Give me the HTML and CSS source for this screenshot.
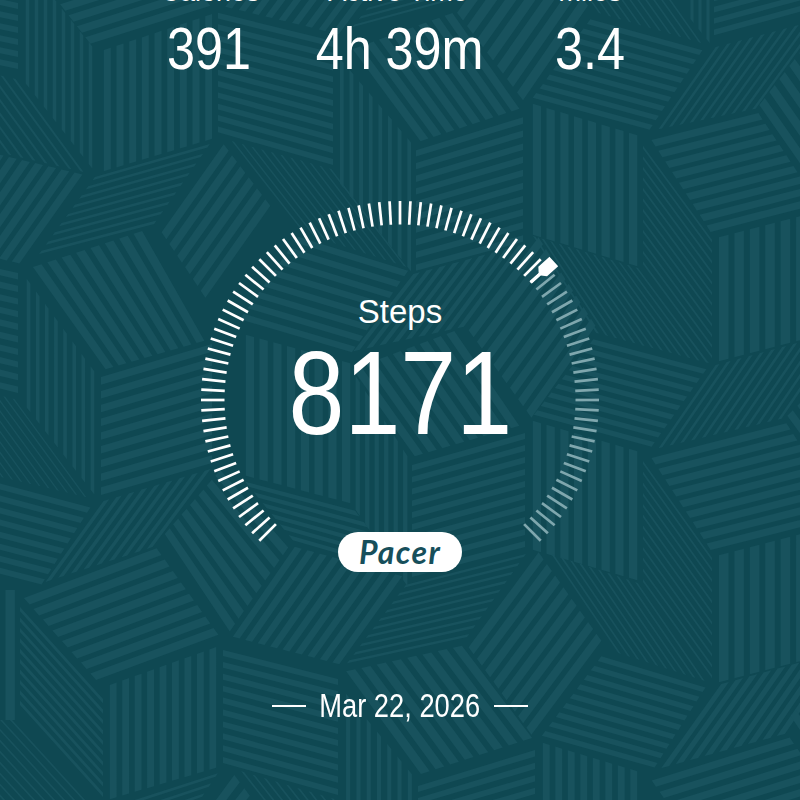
FILE: index.html
```html
<!DOCTYPE html>
<html lang="en">
  <head>
    <meta charset="UTF-8" />
    <meta name="viewport" content="width=device-width, initial-scale=1.0" />
    <title>Pacer - Daily Steps</title>
    <link rel="stylesheet" href="styles.css">
    <script src="main.js" defer></script>
  </head>
  <body>
    <div class="card">
      <!-- striped background -->
      <svg class="pattern" id="pattern" viewBox="0 0 800 800"></svg>

      <ul class="stats">
        <li>
          <span class="label">Calories</span>
          <strong class="narrow">391</strong>
        </li>
        <li>
          <span class="label">Active Time</span>
          <strong class="narrow">4h 39m</strong>
        </li>
        <li>
          <span class="label">miles</span>
          <strong class="narrow">3.4</strong>
        </li>
      </ul>

      <div class="dial">
        <svg class="ring" id="ring" viewBox="-210 -210 420 420"></svg>
        <h1 class="tit">Steps</h1>
        <p class="count narrow">8171</p>
        <div class="logo"><span>Pacer</span></div>
      </div>

      <p class="date"><span class="narrow">Mar 22, 2026</span></p>
    </div>
  </body>
</html>
```
FILE: styles.css
```css
* {
  box-sizing: border-box;
}
body {
  margin: 0;
  font-family: "Liberation Sans", Arial, sans-serif;
  color: #fff;
}
ul,
h1,
p {
  margin: 0;
  padding: 0;
  list-style: none;
  font-weight: normal;
}

.card {
  position: relative;
  display: flex;
  flex-direction: column;
  align-items: center;
  width: 800px;
  height: 800px;
  overflow: hidden;
  background: #0f4852;
}
.pattern {
  position: absolute;
  top: 0;
  left: 0;
  width: 800px;
  height: 800px;
  fill: #18525d;
  /* soft stripe edges */
  filter: blur(0.7px);
}

/* condensed numbers */
.narrow {
  display: block;
  white-space: nowrap;
  transform: scaleX(0.86);
}

/* top row */
.stats {
  position: relative;
  display: grid;
  grid-template-columns: 188px 188px 196px;
  width: 568px;
  margin-top: -24px;
  text-align: center;
}
.label {
  display: block;
  height: 40px;
  font-size: 27px;
  line-height: 32px;
}
.stats strong {
  font-size: 58.5px;
  font-weight: normal;
  line-height: 66px;
}
.stats li:first-child strong {
  transform: translateX(-1px) scaleX(0.86);
}
.stats li:nth-child(2) strong {
  transform: translateX(-1.5px) scaleX(0.86);
}

/* ring */
.dial {
  position: relative;
  display: flex;
  flex-direction: column;
  align-items: center;
  width: 420px;
  height: 420px;
  margin-top: 108px;
}
.ring {
  position: absolute;
  top: 0;
  left: 0;
  width: 420px;
  height: 420px;
  stroke: #fff;
  stroke-width: 2.7;
}
.ring .off {
  stroke: #7fa7ae;
}
.ring .now {
  fill: #fff;
  stroke: none;
}
.tit {
  margin-top: 103px;
  font-size: 33px;
  line-height: 38px;
}
.count {
  margin-top: -5px;
  font-size: 119px;
  line-height: 134px;
  transform: scaleX(0.845);
}
.logo {
  display: flex;
  align-items: center;
  justify-content: center;
  width: 124px;
  height: 40px;
  margin-top: 72px;
  border-radius: 20px;
  background: #fff;
  color: #174f5b;
  font: italic bold 32px/40px Lato, sans-serif;
  letter-spacing: 1.4px;
}

/* date */
.date {
  position: relative;
  display: flex;
  align-items: center;
  justify-content: center;
  width: 256px;
  height: 40px;
  margin-top: 76px;
  font-size: 33.5px;
}
.date .narrow {
  transform: scaleX(0.815);
  margin: 0 -5px;
}
.date::before,
.date::after {
  content: "";
  flex: 0 0 34px;
  height: 2px;
  margin-top: -1px;
  background: #fff;
}
```
FILE: main.js
```js
const NS = "http://www.w3.org/2000/svg";

function add(parent, tag, attrs) {
  const el = document.createElementNS(NS, tag);
  for (const key in attrs) el.setAttribute(key, attrs[key]);
  parent.appendChild(el);
}

// four corners a b c d, stripe count, stripe thickness (0~1)
// stripes run along a-b and stack toward d-c
const tiles = [
  [-90, -48, 18, -24, 18, 72, -90, 50, 8, 0.5],
  [23, -40, 23, 80, 95, 172, 95, 50, 8, 0.4],
  [50, -9, 170, -47, 212, 8, 92, 46, 5, 0.6],
  [101, 51, 101, 172, 215, 138, 215, 13, 9, 0.55],
  [218, 10, 333, 38, 333, 168, 218, 135, 11, 0.5],
  [20, 80, 88, 173, -20, 148, -88, 55, 9, 0.25],
  [85, 175, 22, 264, -80, 240, -20, 150, 8, 0.6],
  [97, 174, 212, 141, 152, 227, 37, 257, 9, 0.35],
  [222, 142, 160, 230, 207, 300, 272, 208, 6, 0.6],
  [228, 140, 300, 232, 410, 268, 335, 170, 11, 0.25],
  [337, 55, 337, 180, 414, 275, 414, 146, 8, 0.4],
  [350, 50, 418, 142, 522, 108, 455, 12, 8, 0.6],
  [416, 147, 523, 114, 523, 245, 416, 274, 10, 0.5],
  [455, 10, 520, -80, 590, 8, 525, 103, 7, 0.6],
  [350, 30, 460, 0, 480, -25, 370, 5, 3, 0.35],
  [222, 6, 285, -80, 405, -50, 342, 35, 9, 0.5],
  [592, 17, 704, 48, 648, 132, 531, 100, 9, 0.5],
  [530, -80, 595, 12, 705, 44, 640, -48, 11, 0.25],
  [688, -60, 688, 16, 712, 46, 712, -60, 3, 0.4],
  [655, 130, 712, 48, 825, 18, 759, 108, 10, 0.35],
  [714, -30, 820, -58, 820, 9, 714, 38, 6, 0.5],
  [757, 108, 820, 198, 880, 120, 817, 30, 6, 0.55],
  [650, 138, 757, 111, 820, 206, 712, 234, 9, 0.6],
  [530, 103, 530, 234, 640, 267, 640, 136, 8, 0.6],
  [530, 235, 593, 332, 712, 364, 641, 269, 13, 0.3],
  [643, 142, 712, 236, 712, 362, 643, 268, 12, 0.3],
  [716, 238, 716, 362, 824, 334, 824, 210, 7, 0.62],
  [595, 337, 708, 367, 650, 449, 532, 417, 9, 0.5],
  [655, 449, 712, 366, 845, 330, 785, 418, 12, 0.35],
  [785, 418, 830, 480, 870, 440, 825, 378, 4, 0.55],
  [650, 456, 785, 421, 847, 518, 712, 552, 9, 0.6],
  [530, 420, 530, 549, 640, 581, 640, 452, 8, 0.6],
  [548, 553, 615, 652, 708, 682, 641, 584, 10, 0.28],
  [643, 457, 712, 554, 712, 682, 643, 586, 12, 0.28],
  [716, 556, 716, 683, 824, 655, 824, 528, 7, 0.62],
  [603, 654, 707, 685, 653, 770, 540, 738, 9, 0.5],
  [658, 769, 718, 685, 845, 650, 788, 733, 9, 0.55],
  [788, 718, 830, 780, 870, 740, 830, 678, 4, 0.55],
  [650, 778, 788, 735, 850, 825, 712, 868, 8, 0.55],
  [540, 742, 540, 860, 640, 860, 640, 772, 8, 0.55],
  [467, 645, 537, 550, 603, 643, 533, 737, 8, 0.6],
  [467, 328, 537, 235, 597, 328, 533, 420, 8, 0.6],
  [350, 352, 410, 275, 528, 243, 467, 326, 9, 0.5],
  [345, 666, 465, 640, 528, 551, 408, 582, 10, 0.35],
  [230, 636, 292, 546, 405, 577, 342, 665, 9, 0.55],
  [300, 234, 410, 268, 350, 355, 238, 322, 8, 0.5],
  [243, 334, 243, 475, 353, 504, 353, 364, 8, 0.6],
  [353, 372, 353, 506, 410, 590, 410, 460, 6, 0.45],
  [350, 370, 412, 457, 522, 425, 457, 330, 8, 0.6],
  [412, 462, 525, 430, 525, 550, 412, 580, 10, 0.5],
  [243, 479, 353, 508, 405, 575, 295, 543, 6, 0.5],
  [163, 536, 228, 634, 290, 545, 222, 468, 7, 0.6],
  [42, 583, 100, 502, 214, 468, 156, 546, 9, 0.45],
  [101, 374, 212, 341, 212, 466, 101, 498, 9, 0.55],
  [30, 268, 103, 370, 207, 340, 145, 230, 8, 0.6],
  [24, 275, 24, 404, 97, 498, 97, 375, 8, 0.4],
  [-90, 245, 18, 270, 18, 396, -90, 370, 10, 0.5],
  [18, 400, 90, 498, -20, 472, -92, 372, 12, 0.22],
  [-20, 475, 92, 505, 40, 587, -72, 558, 8, 0.5],
  [-60, 590, -60, 720, 18, 720, 18, 590, 5, 0.6],
  [22, 596, 155, 546, 220, 637, 98, 682, 8, 0.6],
  [20, 604, 103, 696, 103, 800, 20, 708, 10, 0.4],
  [107, 686, 107, 800, 219, 767, 219, 646, 9, 0.55],
  [223, 647, 338, 676, 338, 798, 223, 766, 10, 0.5],
  [16, 720, 100, 812, 0, 812, -84, 720, 10, 0.22],
  [107, 806, 220, 770, 200, 800, 90, 838, 3, 0.35],
  [190, 830, 232, 772, 262, 812, 220, 860, 3, 0.55],
  [237, 770, 300, 850, 400, 880, 338, 800, 9, 0.25],
  [343, 690, 343, 800, 415, 860, 415, 778, 7, 0.4],
  [343, 672, 418, 775, 535, 737, 465, 645, 8, 0.6],
  [418, 783, 535, 747, 535, 860, 418, 890, 9, 0.5]
];

const pattern = document.getElementById("pattern");
for (const [ax, ay, bx, by, cx, cy, dx, dy, n, thick] of tiles) {
  const left = (t) => (ax + (dx - ax) * t).toFixed(1) + " " + (ay + (dy - ay) * t).toFixed(1);
  const right = (t) => (bx + (cx - bx) * t).toFixed(1) + " " + (by + (cy - by) * t).toFixed(1);
  let d = "";
  for (let i = 0; i < n; i++) {
    const t1 = (i + (1 - thick) / 2) / n;
    const t2 = t1 + thick / n;
    d += `M${left(t1)}L${right(t1)}L${right(t2)}L${left(t2)}Z`;
  }
  add(pattern, "path", { d });
}

// ring: one tick every 3 degrees
const ring = document.getElementById("ring");
const current = 48;
for (let deg = -135; deg <= 135; deg += 3) {
  add(ring, "line", {
    x1: 0, x2: 0, y1: -199, y2: -175.5,
    transform: `rotate(${deg})`,
    class: deg > current ? "off" : "on"
  });
}
add(ring, "path", {
  class: "now",
  d: "M-6.5 -207H6.5V-192L1.6 -188V-176H-1.6V-188L-6.5 -192Z",
  transform: `rotate(${current})`
});
```
